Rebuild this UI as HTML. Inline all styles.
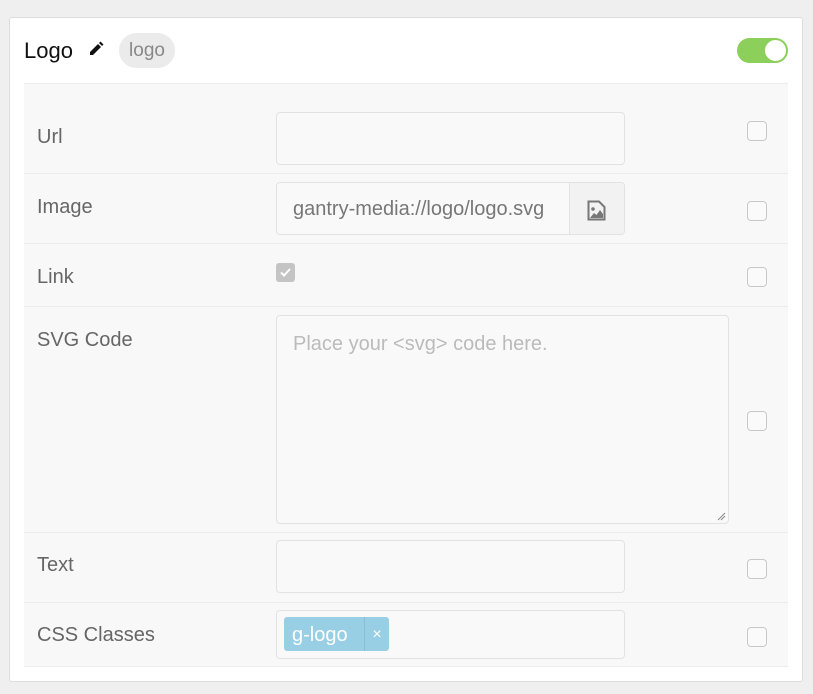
<!DOCTYPE html>
<html><head><meta charset="utf-8"><style>
*{box-sizing:border-box;margin:0;padding:0}
body{width:813px;height:694px;background:#efefef;font-family:"Liberation Sans",sans-serif;position:relative;overflow:hidden}
.card{position:absolute;left:9px;top:17px;width:794px;height:665px;background:#fff;border:1px solid #dcdcdc;border-radius:3px}
.abs{position:absolute}
.title{left:24px;top:38px;font-size:22px;color:#111}
.badge{left:119px;top:33px;width:56px;height:35px;border-radius:18px;background:#ebebeb;color:#888;font-size:19px;line-height:35px;text-align:center}
.tog{left:737px;top:38px;width:51px;height:25px;border-radius:13px;background:#8ccf5a}
.tog i{position:absolute;right:1px;top:1px;width:23px;height:23px;border-radius:50%;background:#fff;border:1px solid #8ccf5a}
.inner{left:24px;top:83px;width:764px;height:584px;background:#f8f8f8;border-top:1px solid #ececec}
.line{left:24px;width:764px;height:1px;background:#ececec}
.lbl{left:37px;font-size:20px;color:#666}
.inp{left:276px;width:349px;height:53px;background:#f9f9f9;border:1px solid #e2e2e2;border-radius:4px}
.cb{left:747px;width:20px;height:20px;border:1px solid #c8c8c8;border-radius:4px;background:#fafafa}
</style></head><body>
<div class="card"></div>
<div class="abs title">Logo</div>
<svg class="abs" style="left:88px;top:41px" width="16" height="16" viewBox="0 0 16 16"><path d="M2 11 L10 3 L13 6 L5 14 L2 14 Z" fill="#111"/><path d="M11 2 L12.5 0.5 L15.5 3.5 L14 5 Z" fill="#111"/></svg>
<div class="abs badge">logo</div>
<div class="abs tog"><i></i></div>
<div class="abs inner"></div>
<div class="abs line" style="top:173px"></div>
<div class="abs line" style="top:243px"></div>
<div class="abs line" style="top:306px"></div>
<div class="abs line" style="top:532px"></div>
<div class="abs line" style="top:602px"></div>
<div class="abs line" style="top:666px"></div>

<div class="abs lbl" style="top:126px">Url</div>
<div class="abs inp" style="top:112px"></div>
<div class="abs cb" style="top:121px"></div>

<div class="abs lbl" style="top:196px">Image</div>
<div class="abs inp" style="top:182px;overflow:hidden"><div style="position:absolute;left:16px;top:15px;font-size:20px;color:#777;white-space:nowrap;width:260px;overflow:hidden">gantry-media://logo/logo.svg</div><div style="position:absolute;left:292px;top:0;width:57px;height:53px;background:#f2f2f2;border-left:1px solid #e2e2e2"></div>
<svg style="position:absolute;left:310px;top:17px" width="19" height="21" viewBox="0 0 19 21"><path d="M1.5 1.5 H12 L17.5 7 V19.5 H1.5 Z" fill="none" stroke="#777" stroke-width="2"/><circle cx="6" cy="9" r="1.8" fill="#777"/><path d="M3 18 L7 13 L9.5 15 L13 10 L16 14 V18 Z" fill="#777"/></svg></div>
<div class="abs cb" style="top:201px"></div>

<div class="abs lbl" style="top:266px">Link</div>
<div class="abs" style="left:276px;top:263px;width:19px;height:19px;border-radius:3px;background:#c4c4c4"><svg width="19" height="19"><path d="M5 9.5 L8 12.5 L14 6" fill="none" stroke="#fff" stroke-width="2"/></svg></div>
<div class="abs cb" style="top:267px"></div>

<div class="abs lbl" style="top:329px">SVG Code</div>
<div class="abs inp" style="top:315px;width:453px;height:209px"><div style="position:absolute;left:16px;top:17px;font-size:20px;color:#bbb">Place your &lt;svg&gt; code here.</div><svg style="position:absolute;right:2px;bottom:2px" width="9" height="9"><path d="M1 8 L8 1 M4 8 L8 4" stroke="#888" stroke-width="1"/></svg></div>
<div class="abs cb" style="top:411px"></div>

<div class="abs lbl" style="top:554px">Text</div>
<div class="abs inp" style="top:540px"></div>
<div class="abs cb" style="top:559px"></div>

<div class="abs lbl" style="top:624px">CSS Classes</div>
<div class="abs inp" style="top:610px;height:49px"></div>
<div class="abs" style="left:284px;top:617px;width:105px;height:34px;background:#99cfe5;border-radius:3px;color:#fff;font-size:20px;line-height:36px"><span style="padding-left:8px">g-logo</span><span style="position:absolute;left:80px;top:0;width:25px;height:34px;border-left:1px solid #88bdd3;text-align:center;font-size:16px">×</span></div>
<div class="abs cb" style="top:627px"></div>
</body></html>
